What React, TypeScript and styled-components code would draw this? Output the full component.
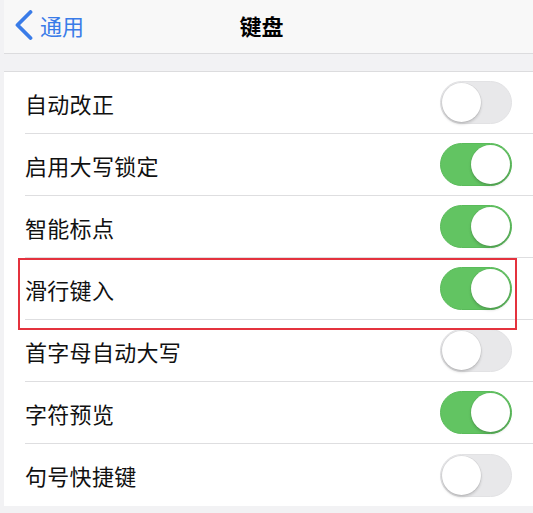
import * as React from "react";
import styled, { createGlobalStyle } from "styled-components";

const GlobalStyle = createGlobalStyle`
  html, body {
    margin: 0;
    padding: 0;
    background: #f2f2f4;
    font-family: "Noto Sans CJK SC", "Noto Sans", sans-serif;
  }
`;

const Page = styled.div`
  width: 533px;
  height: 513px;
  overflow: hidden;
  background: #f2f2f4;
`;

const NavBar = styled.div`
  height: 53px;
  display: grid;
  grid-template-columns: 1fr auto 1fr;
  align-items: center;
  background: #f8f8f8;
  border-bottom: 1px solid #dcdcde;
  margin-left: 4px;
`;

const BackButton = styled.div`
  display: flex;
  align-items: center;
  gap: 6px;
  margin-left: 10px;
  color: #3a7ce8;
  font-size: 22px;
  line-height: 1;
  padding-bottom: 4px;
`;

const Title = styled.div`
  font-size: 22px;
  font-weight: 700;
  color: #000;
  padding-bottom: 4px;
  margin-right: 14px;
`;

const Gap = styled.div`
  height: 17px;
  margin-left: 4px;
  border-bottom: 1px solid #dcdcde;
`;

const List = styled.div`
  margin-left: 4px;
  background: #fff;
`;

const Row = styled.div`
  position: relative;
  height: 62px;
  padding-left: 21px;
`;

const RowInner = styled.div<{ $last?: boolean }>`
  height: 100%;
  box-sizing: border-box;
  display: flex;
  align-items: center;
  justify-content: space-between;
  padding-right: 21px;
  border-bottom: ${({ $last }) => ($last ? "none" : "1px solid #dedee0")};
`;

const Label = styled.span`
  font-size: 22px;
  color: #111;
  letter-spacing: 0.3px;
`;

const Track = styled.div<{ $on: boolean }>`
  position: relative;
  width: 72px;
  height: 43px;
  border-radius: 22px;
  box-sizing: border-box;
  background: ${({ $on }) => ($on ? "#62c462" : "#e8e8ea")};
  border: 1px solid ${({ $on }) => ($on ? "#5abb5a" : "#e2e2e4")};
`;

const Knob = styled.div<{ $on: boolean }>`
  position: absolute;
  top: 1px;
  left: ${({ $on }) => ($on ? "30px" : "1px")};
  width: 39px;
  height: 39px;
  border-radius: 50%;
  background: #fff;
  box-shadow: 0 2px 3px rgba(0, 0, 0, 0.18), 0 0 0 0.5px rgba(0, 0, 0, 0.08);
`;

const Highlight = styled.div`
  position: absolute;
  top: 0;
  left: 14px;
  width: 499px;
  height: 72px;
  box-sizing: border-box;
  border: 2.5px solid #e4323e;
  pointer-events: none;
  z-index: 2;
`;

const items = [
  { label: "自动改正", on: false },
  { label: "启用大写锁定", on: true },
  { label: "智能标点", on: true },
  { label: "滑行键入", on: true, marked: true },
  { label: "首字母自动大写", on: false },
  { label: "字符预览", on: true },
  { label: "句号快捷键", on: false },
];

function Toggle({ on }: { on: boolean }) {
  return (
    <Track $on={on}>
      <Knob $on={on} />
    </Track>
  );
}

export default function App() {
  return (
    <Page>
      <GlobalStyle />
      <NavBar>
        <BackButton>
          <svg width="20" height="30" viewBox="0 0 20 30">
            <path
              d="M16.5 2 L3.5 15 L16.5 28"
              fill="none"
              stroke="#3a7ce8"
              strokeWidth="3.8"
              strokeLinecap="round"
              strokeLinejoin="round"
            />
          </svg>
          <span>通用</span>
        </BackButton>
        <Title>键盘</Title>
        <div />
      </NavBar>
      <Gap />
      <List>
        {items.map((item, i) => (
          <Row key={item.label}>
            {item.marked && <Highlight />}
            <RowInner $last={i === items.length - 1}>
              <Label>{item.label}</Label>
              <Toggle on={item.on} />
            </RowInner>
          </Row>
        ))}
      </List>
    </Page>
  );
}
